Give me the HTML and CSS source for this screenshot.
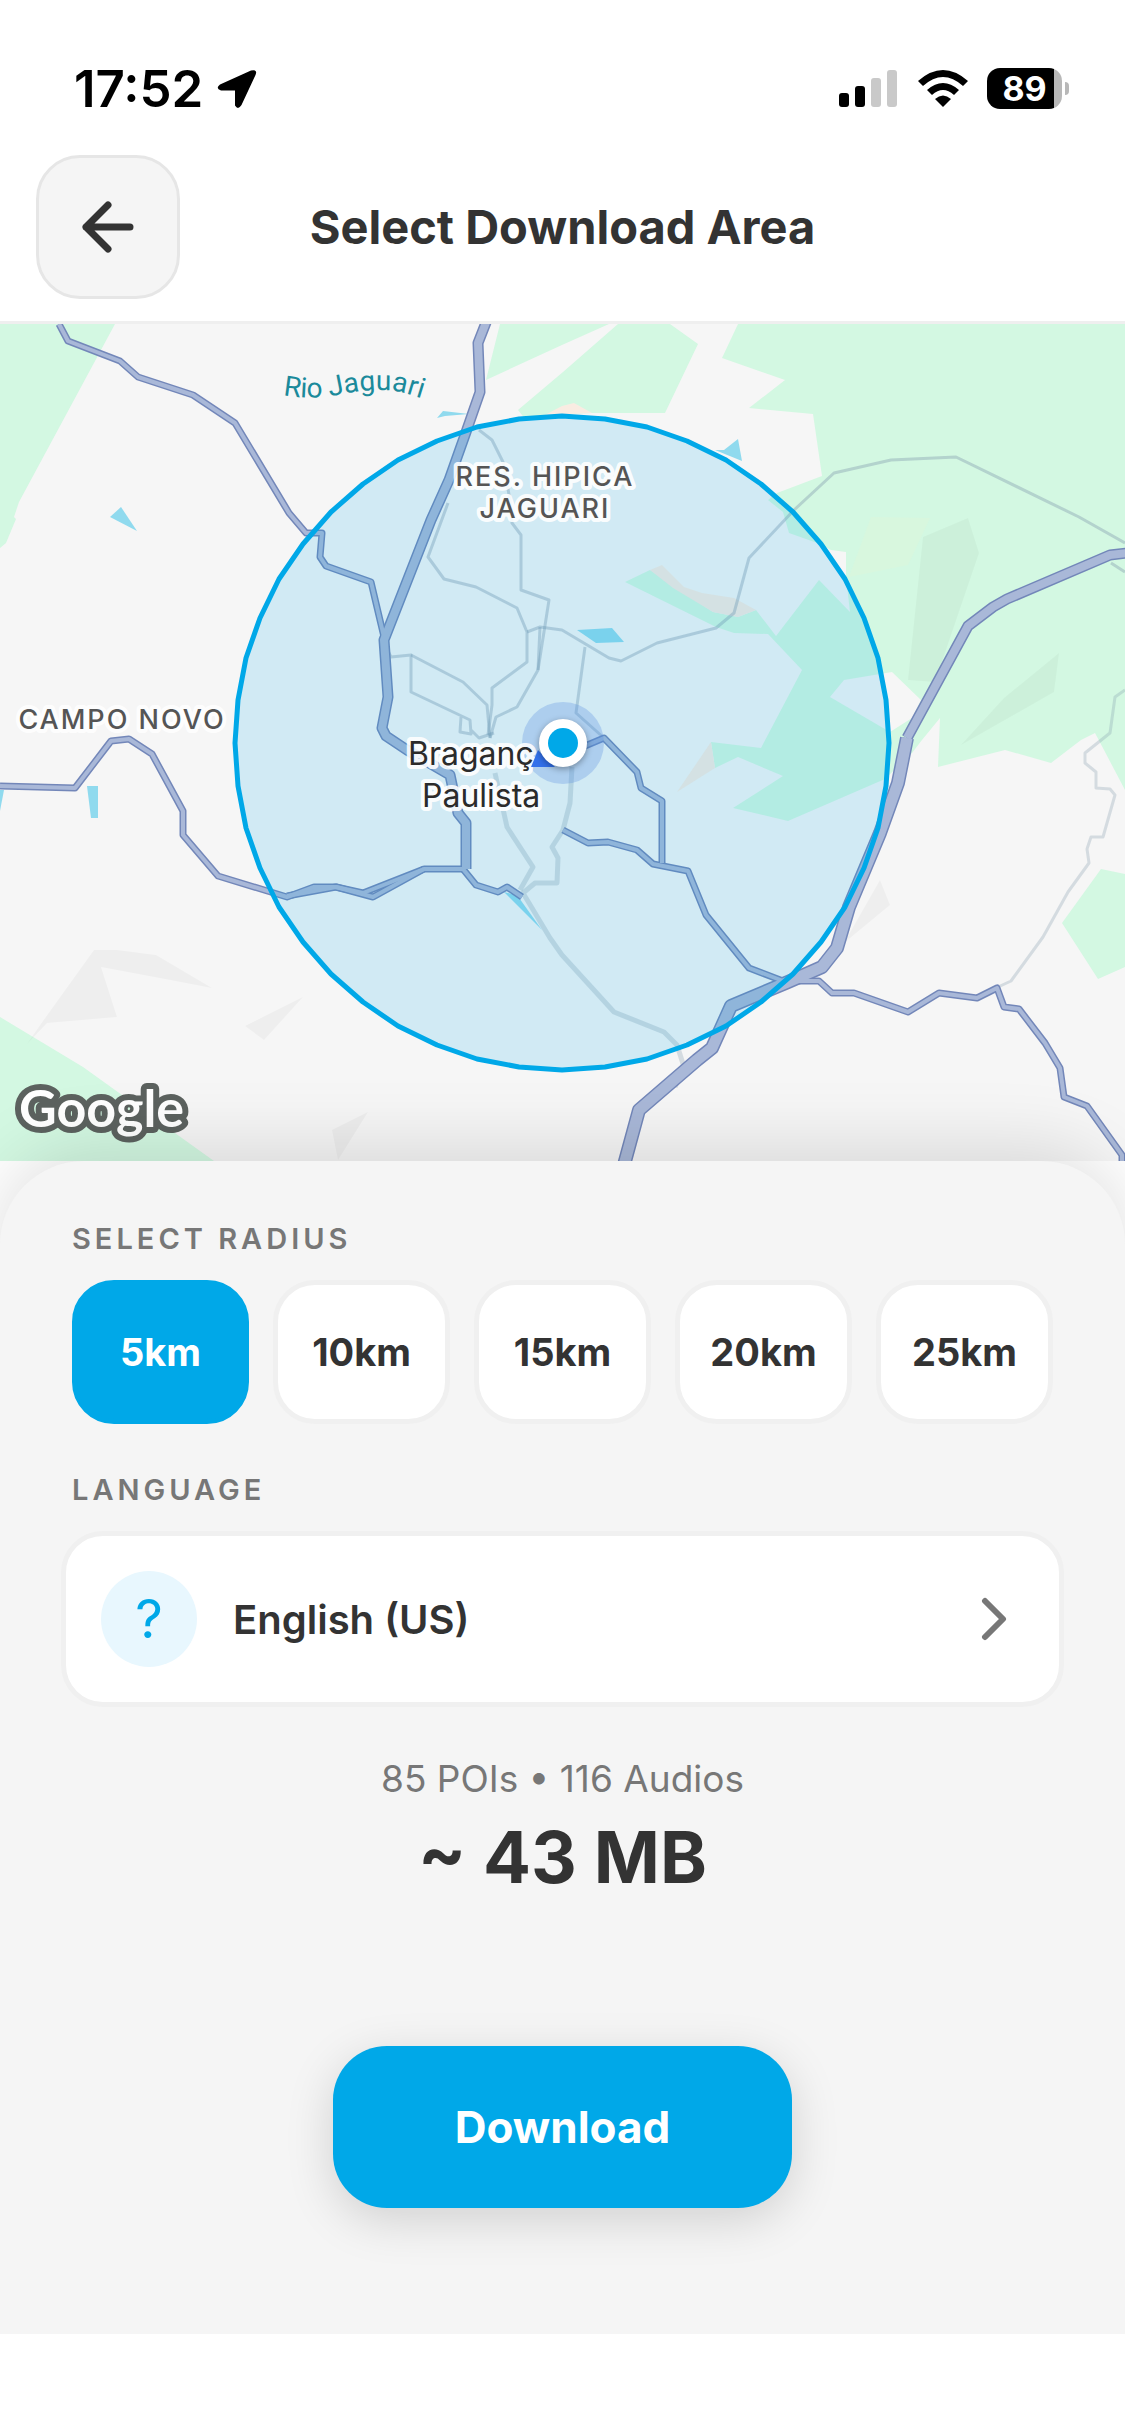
FILE: index.html
```html
<!DOCTYPE html>
<html lang="en">
<head>
<meta charset="UTF-8">
<meta name="viewport" content="width=device-width, initial-scale=1.0">
<title>Select Download Area</title>
<link rel="stylesheet" href="styles.css">
</head>
<body>

<div class="status-bar">
    <div class="status-left">
        <span class="clock">17:52</span>
        <svg class="location" width="40" height="40" viewBox="0 0 40 40" aria-hidden="true">
            <path d="M3 15.500 34 1.500Q41 0 38.500 6L24.500 36Q21 41.500 18 36.500L18 21.500 4 21.500Q-2 19.500 3 15.500Z"/>
        </svg>
    </div>
    <div class="status-right">
        <svg width="60" height="42" viewBox="0 0 60 42" aria-hidden="true">
            <rect x="0" y="25" width="10" height="14" rx="3"/>
            <rect x="16" y="18" width="10" height="21" rx="3"/>
            <rect x="32" y="10" width="10" height="29" rx="3" fill="#c9c9c9"/>
            <rect x="48" y="2" width="10" height="37" rx="3" fill="#c9c9c9"/>
        </svg>
        <svg width="52" height="42" viewBox="0 0 52 42" aria-hidden="true">
            <path d="M1 13Q26 -9 51 13L46 18Q26 0 6 18Z"/>
            <path d="M10 22Q26 8 42 22L37 27Q26 17 15 27Z"/>
            <path d="M18 31Q26 24 34 31L26 39Z"/>
        </svg>
        <div class="battery">
            <span class="battery-level">89</span>
            <span class="battery-nub"></span>
        </div>
    </div>
</div>

<header class="header">
    <button class="back" type="button" aria-label="Back">
        <svg width="52" height="52" viewBox="0 0 52 52" aria-hidden="true">
            <path d="M48 26H4M26 4 4 26l22 22"/>
        </svg>
    </button>
    <h1 class="title">Select Download Area</h1>
</header>

<main>
    <svg class="map" viewBox="0 324 1125 837" role="img" aria-label="Map of Bragança Paulista">
        <defs>
            <path id="river" d="M283 395C300 398 318 399 338 395S366 390 382 390 404 393 440 404"/>
            <g id="minor">
                <path d="M0 786 75 788 111 741 129 739 152 754 183 811V835L218 876 287 897 314 887H336L373 897 424 869H463"/>
                <path d="M287 896 336 887 363 893 424 869"/>
                <path d="M59 324 68 341 120 361 138 377 193 395 235 423 289 513 306 533H322L320 557 326 566 371 582 384 637"/>
                <path d="M463 869 476 885 498 892 507 887 522 897"/>
                <path d="M585 746 604 738 637 772 641 788 662 801V863"/>
                <path d="M563 830 588 843 608 842 637 850 653 864 688 871 706 915 749 968 783 981H819L832 993H854L908 1012 939 993 977 998 997 988 1004 1007 1019 1009 1045 1043 1060 1068 1064 1097 1087 1106 1122 1155V1165"/>
            </g>
            <g id="major">
                <path d="M487 320 478 343 480 392 465 435 449 480 431 520 384 640 388 697 382 728 386 736 407 750 450 775 458 813 466 823V869"/>
                <path d="M907 738 968 626 993 607 1007 599 1110 555 1127 553"/>
            </g>
            <path id="highway" d="M624 1165 639 1110 697 1060 712 1048 731 1006 788 982 822 967 837 948 849 907 880 833 898 783 907 738"/>
        </defs>

        <rect class="land" y="324" width="1125" height="837"/>

        <g class="park">
            <path d="M0 324H115L19 502 14 517 16 519 6 543 0 548Z"/>
            <path d="M0 1017 83 1067 154 1118 214 1161H0Z"/>
            <path d="M500 324H609L562 345 486 380Z"/>
            <path d="M618 324H670L698 344 665 413H592L545 415 526 420 518 410 563 372Z"/>
            <path fill-rule="evenodd" d="M738 324H1125V790L1104 750 1095 733 1081 740 1051 763 1005 750 938 767 940 718 922 740 912 753 885 779 788 821 733 808 783 776 738 757 715 768 711 742 761 748 802 670 768 634 734 633 716 627 625 582 650 570 713 612 738 617 756 610 776 636 819 580 850 612 846 577V552L831 550 820 544 789 533 783 512 768 500 777 493 822 476 813 414 749 408 785 380 722 358ZM830 697 890 732 912 718 921 700 892 672 844 680Z"/>
            <path d="M1101 869 1125 874V967L1098 979 1062 923Z"/>
        </g>

        <g class="sand">
            <path d="M650 570 662 565 684 587 702 593 734 598 756 610 738 617 713 612 673 588Z"/>
            <path d="M711 742 715 768 677 792Z"/>
            <path d="M545 415 562 406 574 403 592 413Z"/>
        </g>
        <path class="sand-soft" d="M871 517 930 518 908 565 849 577Z"/>

        <g class="hill">
            <path d="M94 950H117L156 955 212 988 165 979 101 967 117 1017 47 1023 27 1044 43 1021Z"/>
            <path d="M303 997 245 1026 264 1040Z"/>
            <path d="M368 1112 332 1130 338 1160Z"/>
            <path d="M880 880 890 905 844 943Z"/>
            <path d="M923 537 968 518 979 553 935 682 908 680Z"/>
            <path d="M1059 653 1054 692 961 745 1004 698Z"/>
        </g>

        <g class="water">
            <path d="M110 517 121 507 137 531Z"/>
            <path d="M87 786H98V818H91Z"/>
            <path d="M0 790H4L0 811Z"/>
            <path d="M437 418 443 411 469 414 445 416Z"/>
            <path d="M715 450 724 450 738 439 742 461Z"/>
            <path d="M577 630 612 628 624 642 596 643Z"/>
            <path d="M504 892 517 895 542 930Z"/>
        </g>

        <g class="street">
            <path d="M479 430 492 440 503 462 510 500 512 523 521 535V590L549 600 538 670 517 707 496 717 490 738"/>
            <path d="M448 503 428 557 444 579 476 587 517 608 527 632V662L492 688V705L488 735"/>
            <path d="M384 643 391 657 411 655V692L470 720 471 734 460 732 461 717M471 730 479 738 494 733"/>
            <path d="M411 655 463 682 487 705 490 738M540 627 538 670"/>
            <path d="M527 632 540 627 562 630 609 658 621 661 657 643 716 628 734 613 749 558 794 510 834 473 891 460 956 457 1079 517 1125 543"/>
            <path d="M585 647 576 713 604 738M1111 563 1125 572"/>
        </g>
        <g class="street wide">
            <path d="M495 773 507 827 533 867 520 890"/>
            <path d="M572 767 570 803 563 830 552 847 558 858 557 883H535L523 893 550 938 562 955 614 1012 664 1032 677 1045 684 1067 675 1087"/>
        </g>
        <path class="street pale" d="M1125 690 1115 697 1110 733 1085 753V763L1096 772V788L1110 789 1115 795 1103 837H1091L1087 849 1089 863 1068 892 1043 937 1011 981 998 987"/>

        <g class="casing">
            <use href="#minor" stroke-width="7"/>
            <use href="#major" stroke-width="11"/>
            <use href="#highway" stroke-width="14"/>
        </g>
        <g class="road">
            <use href="#minor" stroke-width="4"/>
            <use href="#major" stroke-width="8"/>
            <use href="#highway" stroke-width="11"/>
        </g>

        <!-- download radius -->
        <polygon class="radius" transform="translate(562 743)" points="0,-327 43,-324 85,-316 125,-302 164,-283 199,-259 231,-231 259,-199 283,-164 302,-125 316,-85 324,-43 327,0 324,43 316,85 302,125 283,164 259,199 231,231 199,259 164,283 125,302 85,316 43,324 0,327 -43,324 -85,316 -125,302 -164,283 -199,259 -231,231 -259,199 -283,164 -302,125 -316,85 -324,43 -327,0 -324,-43 -316,-85 -302,-125 -283,-164 -259,-199 -231,-231 -199,-259 -164,-283 -125,-302 -85,-316 -43,-324"/>

        <circle class="accuracy" cx="563" cy="743" r="41"/>
        <text class="label river-name"><textPath href="#river">Rio Jaguari</textPath></text>
        <text class="label district" x="545" y="486">RES. HIPICA</text>
        <text class="label district" x="545" y="518">JAGUARI</text>
        <text class="label district" x="122" y="729">CAMPO NOVO</text>
        <text class="label city" x="408" y="765">Braganç</text>
        <text class="label city" x="422" y="807">Paulista</text>

        <path class="heading" d="M531 767 538 750 555 767Z"/>
        <circle class="pin" cx="563" cy="743" r="24"/>
        <circle class="pin-dot" cx="563" cy="743" r="15"/>

        <text class="google" x="19" y="1127">Google</text>
    </svg>

    <section class="sheet">
        <h2 class="section-label">Select radius</h2>
        <div class="radius-list">
            <button class="chip active" type="button" aria-pressed="true">5km</button>
            <button class="chip" type="button" aria-pressed="false">10km</button>
            <button class="chip" type="button" aria-pressed="false">15km</button>
            <button class="chip" type="button" aria-pressed="false">20km</button>
            <button class="chip" type="button" aria-pressed="false">25km</button>
        </div>

        <h2 class="section-label">Language</h2>
        <button class="language" type="button">
            <span class="flag">?</span>
            <span class="language-name">English (US)</span>
            <svg width="28" height="44" viewBox="0 0 28 44" aria-hidden="true">
                <path d="M4 4 22 22 4 40"/>
            </svg>
        </button>

        <div class="summary">
            <p class="counts">85 POIs • 116 Audios</p>
            <p class="size">~ 43 MB</p>
        </div>

        <button class="download" type="button">Download</button>
    </section>
</main>

</body>
</html>
```
FILE: styles.css
```css
* {
    box-sizing: border-box;
}
body {
    margin: 0;
    background: #fff;
    color: #333;
    font-family: Inter, "Liberation Sans", sans-serif;
    overflow-x: hidden;
}
h1, h2, p {
    margin: 0;
}
button {
    font-family: inherit;
    color: inherit;
    cursor: pointer;
}

/* status bar */
.status-bar {
    display: flex;
    justify-content: space-between;
    align-items: center;
    height: 131px;
    padding: 46px 56px 0 74px;
    color: #000;
}
.status-left, .status-right {
    display: flex;
    align-items: center;
}
.status-left {
    gap: 14px;
}
.status-right {
    gap: 18px;
}
.clock {
    font-size: 51px;
    font-weight: 600;
    line-height: 60px;
}
.battery {
    display: flex;
    align-items: center;
    gap: 3px;
}
.battery-level {
    width: 75px;
    height: 41px;
    border-radius: 13px;
    background: linear-gradient(to right, #000 67px, #b8b8b8 67px);
    color: #fff;
    font-size: 34px;
    font-weight: 700;
    line-height: 41px;
    text-align: center;
}
.battery-nub {
    width: 4px;
    height: 13px;
    border-radius: 0 4px 4px 0;
    background: #b8b8b8;
}

/* header */
.header {
    display: grid;
    grid-template-columns: 144px 1fr 144px;
    align-items: center;
    padding: 24px 36px 22px;
    border-bottom: 3px solid #efefef;
}
.back {
    display: flex;
    align-items: center;
    justify-content: center;
    height: 144px;
    border: 3px solid #e6e6e6;
    border-radius: 44px;
    background: #f5f5f5;
}
.back path {
    fill: none;
    stroke: #333;
    stroke-width: 7;
    stroke-linecap: round;
    stroke-linejoin: round;
}
.title {
    font-size: 47px;
    font-weight: 700;
    line-height: 60px;
    text-align: center;
}

/* map */
.map {
    display: block;
    width: 100%;
}
.land { fill: #f6f6f6; }
.park { fill: #d3f8e2; }
.sand { fill: #f9ece2; }
.sand-soft { fill: #d8f7de; }
.hill { fill: #000; fill-opacity: 0.03; }
.water { fill: #90daee; }
.street {
    fill: none;
    stroke: #7f96aa;
    stroke-opacity: 0.38;
    stroke-width: 3;
    stroke-linejoin: round;
}
.wide {
    stroke-opacity: 0.28;
    stroke-width: 5;
}
.pale {
    stroke-opacity: 0.28;
}
.casing, .road {
    fill: none;
    stroke-linejoin: round;
}
.casing { stroke: #7387b9; }
.road { stroke: #a9b8d8; }
.radius {
    fill: #00a8e8;
    fill-opacity: 0.15;
    stroke: #00a8e8;
    stroke-width: 5;
    stroke-linejoin: round;
}
.accuracy {
    fill: #5b8de0;
    fill-opacity: 0.3;
}
.label {
    paint-order: stroke;
    stroke: #fff;
    stroke-opacity: 0.9;
    stroke-width: 8;
    stroke-linejoin: round;
}
.river-name {
    fill: #1b8a9b;
    font-family: Roboto, sans-serif;
    font-size: 28px;
    stroke: none;
}
.district {
    fill: #555;
    font-size: 27px;
    font-weight: 500;
    letter-spacing: 2px;
    text-anchor: middle;
}
.city {
    fill: #2b2b2b;
    font-size: 32px;
}
.heading { fill: #3270ea; }
.pin {
    fill: #fff;
    filter: drop-shadow(0 2px 3px rgba(0, 0, 0, 0.35));
}
.pin-dot { fill: #00a8e8; }
.google {
    fill: #fff;
    font-family: Lato, sans-serif;
    font-size: 52px;
    font-weight: 700;
    paint-order: stroke;
    stroke: #5c625f;
    stroke-width: 12;
    stroke-linejoin: round;
}

/* bottom sheet */
.sheet {
    position: relative;
    display: flex;
    flex-direction: column;
    padding: 60px 72px 126px;
    border-radius: 84px 84px 0 0;
    background: #f5f5f5;
    box-shadow: 0 -12px 72px rgba(0, 0, 0, 0.13);
}
.section-label {
    color: #777;
    font-size: 29px;
    font-weight: 600;
    line-height: 36px;
    letter-spacing: 4px;
    text-transform: uppercase;
}
.radius-list {
    display: grid;
    grid-template-columns: repeat(5, 1fr);
    gap: 24px;
    margin: 23px 0 48px;
}
.chip {
    height: 144px;
    padding: 0;
    border: 5px solid #f0f0f0;
    border-radius: 42px;
    background: #fff;
    font-size: 38px;
    font-weight: 700;
}
.chip.active {
    border-color: #00a8e8;
    background: #00a8e8;
    color: #fff;
}
.language {
    display: flex;
    align-items: center;
    gap: 36px;
    height: 176px;
    margin: 23px -11px 0;
    padding: 0 50px 0 35px;
    border: 5px solid #f0f0f0;
    border-radius: 42px;
    background: #fff;
    text-align: left;
}
.flag {
    width: 96px;
    height: 96px;
    border-radius: 50%;
    background: #e8f7fe;
    color: #00a8e8;
    font-size: 54px;
    line-height: 96px;
    text-align: center;
}
.language-name {
    flex: 1;
    font-size: 40px;
    font-weight: 600;
}
.language path {
    fill: none;
    stroke: #777;
    stroke-width: 6;
    stroke-linecap: round;
    stroke-linejoin: round;
}
.summary {
    margin-top: 48px;
    text-align: center;
}
.counts {
    color: #777;
    font-size: 37px;
    line-height: 48px;
}
.size {
    margin-top: 12px;
    font-size: 71px;
    font-weight: 700;
    line-height: 84px;
}
.download {
    align-self: center;
    height: 162px;
    margin-top: 147px;
    padding: 0 122px;
    border: 0;
    border-radius: 54px;
    background: #00a8e8;
    box-shadow: 0 12px 48px rgba(0, 0, 0, 0.15);
    color: #fff;
    font-size: 44px;
    font-weight: 700;
}
```
